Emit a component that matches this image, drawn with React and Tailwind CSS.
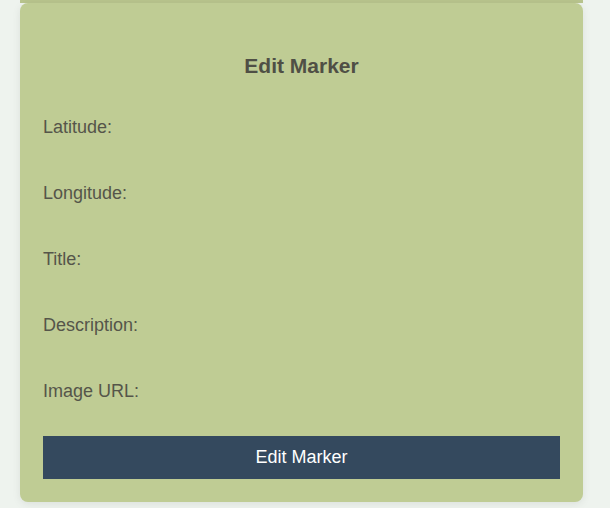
const fields = ['Latitude:', 'Longitude:', 'Title:', 'Description:', 'Image URL:'];

export default function App() {
  return (
    <div className="min-h-[508px] bg-[#eef3ee] font-['Liberation_Sans',Arial,sans-serif]">
      <div className="ml-[20px] h-[3px] w-[563px] bg-[#b8c48d]" />
      <div className="ml-[20px] w-[563px] rounded-[8px] bg-[#bfcc94] px-[23px] pb-[23px] pt-[51px] shadow-[0_2px_8px_rgba(0,0,0,0.08)]">
        <h2 className="h-[24px] text-center text-[21px] font-bold leading-[24px] text-[#4f4f45]">Edit Marker</h2>
        <div className="mt-[39px] flex flex-col gap-[46px]">
          {fields.map((f) => (
            <label key={f} className="block h-[20px] text-[18px] leading-[20px] text-[#55554a]">
              {f}
            </label>
          ))}
        </div>
        <button className="mt-[35px] block h-[43px] w-full bg-[#34495e] text-[18px] text-white">
          Edit Marker
        </button>
      </div>
    </div>
  );
}
